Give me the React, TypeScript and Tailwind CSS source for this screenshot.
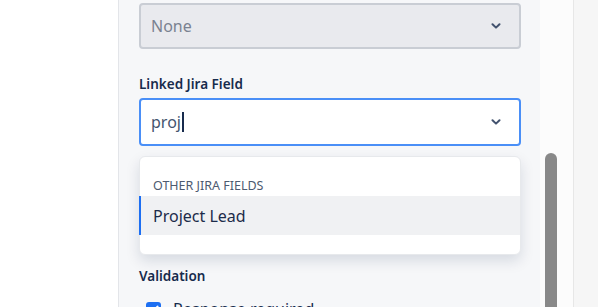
import React from "react";

const Chevron: React.FC = () => (
  <svg width="10" height="6" viewBox="0 0 10 6" className="shrink-0">
    <path
      d="M1.5 1.2 L5 4.6 L8.5 1.2"
      fill="none"
      stroke="#42526e"
      strokeWidth="2"
      strokeLinecap="round"
      strokeLinejoin="round"
    />
  </svg>
);

const App: React.FC = () => {
  return (
    <div
      className="flex h-[307px] w-[598px] overflow-hidden bg-white"
      style={{ fontFamily: '"Noto Sans", "Segoe UI", sans-serif' }}
    >
      {/* left blank column */}
      <div className="w-[119px] shrink-0 border-r border-[#e3e5e9] bg-white" />

      {/* settings panel */}
      <div className="w-[421px] shrink-0 bg-[#f6f7f9] pl-[20px] pr-[19px] pt-[3px]">
        <div className="flex h-[46px] items-center justify-between rounded-[4px] border-2 border-[#c9cdd4] bg-[#e9eaee] pl-[10px] pr-[18px]">
          <span className="text-[16px] text-[#7a8291]">None</span>
          <Chevron />
        </div>

        <div className="mt-[26px] text-[13.5px] font-semibold leading-[18px] text-[#172b4d]">
          Linked Jira Field
        </div>

        <div className="relative mt-[5px]">
          <div className="flex h-[48px] items-center justify-between rounded-[4px] border-2 border-[#4a8ff7] bg-white pl-[10px] pr-[18px]">
            <span className="flex items-center text-[16px] text-[#44546f]">
              proj
              <span className="ml-[1px] inline-block h-[20px] w-[2px] bg-[#172b4d]" />
            </span>
            <Chevron />
          </div>

          {/* dropdown menu */}
          <div className="absolute left-0 right-0 top-full z-10 mt-[10px] rounded-[6px] border border-[#e7e9ec] bg-white pb-[19px] pt-[19px] shadow-[0_6px_14px_rgba(9,30,66,0.13)]">
            <div className="pl-[13px] text-[12.5px] uppercase leading-[20px] text-[#4d5a70]">
              Other Jira fields
            </div>
            <div className="-ml-px flex h-[39px] items-center border-l-2 border-[#1d6ff2] bg-[#f0f1f3] pl-[12px] text-[16px] text-[#1c2b4a]">
              Project Lead
            </div>
          </div>
        </div>

        <div className="mt-[121px] text-[13.5px] font-semibold leading-[18px] text-[#172b4d]">
          Validation
        </div>
        <div className="mt-[12px] flex items-center pl-[7px]">
          <span className="flex h-[15px] w-[15px] items-center justify-center rounded-[3px] bg-[#1d6ff2]">
            <svg width="11" height="9" viewBox="0 0 11 9">
              <path
                d="M1.5 4.6 L4.2 7.2 L9.5 1.6"
                fill="none"
                stroke="white"
                strokeWidth="2"
                strokeLinecap="round"
                strokeLinejoin="round"
              />
            </svg>
          </span>
          <span className="ml-[12px] text-[16px] text-[#172b4d]">Response required</span>
        </div>
      </div>

      {/* scrollbar track */}
      <div className="w-[34px] shrink-0 border-r border-[#e7e7e7] bg-[#fcfcfc] pt-[153px]">
        <div className="ml-[5px] h-[200px] w-[12px] rounded-full bg-[#898989]" />
      </div>

      {/* right area */}
      <div className="flex-1 bg-[#f6f6f6]" />
    </div>
  );
};

export default App;
